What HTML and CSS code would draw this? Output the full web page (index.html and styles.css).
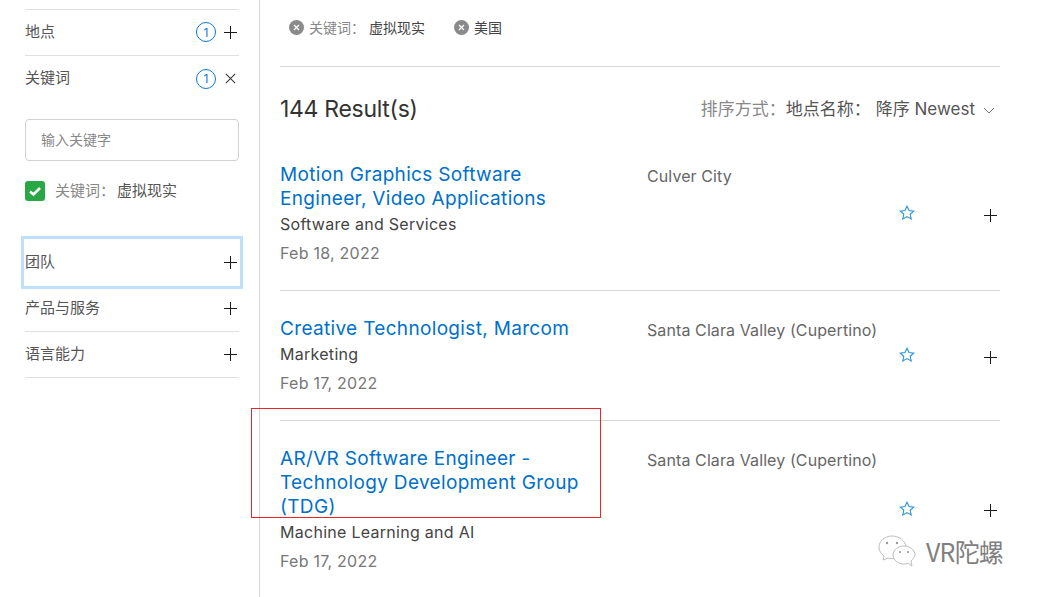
FILE: index.html
```html
<!DOCTYPE html>
<html lang="zh">
<head>
<meta charset="utf-8">
<title>Jobs</title>
<link rel="stylesheet" href="styles.css">
</head>
<body>
<div class="page">
  <aside class="sidebar">
    <div class="filter first"><span class="name">地点</span><span class="controls"><span class="count">1</span><svg class="ico" viewBox="0 0 14 14"><path d="M7 0v14M0 7h14"/></svg></span></div>
    <div class="filter open"><span class="name">关键词</span><span class="controls"><span class="count">1</span><svg class="ico x" viewBox="0 0 14 14"><path d="M2 2l10 10M12 2L2 12"/></svg></span></div>
    <div class="keyword">
      <div class="input">输入关键字</div>
      <div class="check"><svg class="box" viewBox="0 0 20 20"><rect width="20" height="20" rx="3" fill="#28a745"/><path d="M5 10.5l3.500 3L15 7" fill="none" stroke="#fff" stroke-width="2.600"/></svg><span class="lab">关键词：</span><span class="val">虚拟现实</span></div>
    </div>
    <div class="filter focus"><span class="name">团队</span><svg class="ico" viewBox="0 0 14 14"><path d="M7 0v14M0 7h14"/></svg></div>
    <div class="filter after"><span class="name">产品与服务</span><svg class="ico" viewBox="0 0 14 14"><path d="M7 0v14M0 7h14"/></svg></div>
    <div class="filter"><span class="name">语言能力</span><svg class="ico" viewBox="0 0 14 14"><path d="M7 0v14M0 7h14"/></svg></div>
  </aside>
  <main class="main">
    <div class="tags">
      <span class="tag"><svg class="tx" viewBox="0 0 15 15"><circle cx="7.500" cy="7.500" r="7.500" fill="#8a8a8a"/><path d="M5 5l5 5M10 5l-5 5" stroke="#fff" stroke-width="1.300"/></svg><span class="lab">关键词：</span><span class="val">虚拟现实</span></span>
      <span class="tag"><svg class="tx" viewBox="0 0 15 15"><circle cx="7.500" cy="7.500" r="7.500" fill="#8a8a8a"/><path d="M5 5l5 5M10 5l-5 5" stroke="#fff" stroke-width="1.300"/></svg><span class="val">美国</span></span>
    </div>
    <div class="head">
      <h1>144 Result(s)</h1>
      <div class="sort"><span class="sl">排序方式：</span><span class="sn">地点名称：</span><span class="sv">降序 Newest</span><svg class="chev" viewBox="0 0 12 7"><path d="M1 1l5 5 5-5"/></svg></div>
    </div>
    <article class="job one">
      <div class="info"><a class="title">Motion Graphics Software Engineer, Video Applications</a><div class="team">Software and Services</div><div class="date">Feb 18, 2022</div></div>
      <div class="loc">Culver City</div>
      <div class="acts a1"><svg class="star" viewBox="0 0 16 16"><path d="M8 1.200l2 4.400 4.700.5-3.500 3.200 1 4.700L8 11.600l-4.200 2.400 1-4.700L1.300 6.100 6 5.600z"/></svg><svg class="ico" viewBox="0 0 14 14"><path d="M7 0v14M0 7h14"/></svg></div>
    </article>
    <article class="job two">
      <div class="info"><a class="title">Creative Technologist, Marcom</a><div class="team">Marketing</div><div class="date">Feb 17, 2022</div></div>
      <div class="loc">Santa Clara Valley (Cupertino)</div>
      <div class="acts a2"><svg class="star" viewBox="0 0 16 16"><path d="M8 1.200l2 4.400 4.700.5-3.500 3.200 1 4.700L8 11.600l-4.200 2.400 1-4.700L1.300 6.100 6 5.600z"/></svg><svg class="ico" viewBox="0 0 14 14"><path d="M7 0v14M0 7h14"/></svg></div>
    </article>
    <article class="job three">
      <div class="info"><a class="title">AR/VR Software Engineer - Technology Development Group (TDG)</a><div class="team">Machine Learning and AI</div><div class="date">Feb 17, 2022</div></div>
      <div class="loc">Santa Clara Valley (Cupertino)</div>
      <div class="acts a3"><svg class="star" viewBox="0 0 16 16"><path d="M8 1.200l2 4.400 4.700.5-3.500 3.200 1 4.700L8 11.600l-4.200 2.400 1-4.700L1.300 6.100 6 5.600z"/></svg><svg class="ico" viewBox="0 0 14 14"><path d="M7 0v14M0 7h14"/></svg></div>
    </article>
  </main>
</div>
<div class="redbox"></div>
<div class="mark"><svg class="wc" viewBox="0 0 40 34"><g fill="#fff" stroke="#bdbdbd" stroke-width="1"><path d="M15 2C8 2 2 7 2 13c0 4 2 7 5 9l-1 4 5-2c3 1 5 1 8 0 6-1 10-6 10-11C29 7 22 2 15 2z"/><path d="M27 12c-6 0-11 4-11 9s5 9 11 9c1 0 3 0 4-1l4 3-1-5c2-2 4-4 4-6 0-5-5-9-11-9z"/></g><g fill="#999"><circle cx="10" cy="9" r="1.200"/><circle cx="20" cy="9" r="1.200"/><circle cx="23" cy="18" r="1.100"/><circle cx="31" cy="18" r="1.100"/></g></svg><span>VR陀螺</span></div>
</body>
</html>
```
FILE: styles.css
```css
* { box-sizing: border-box; }
html, body { margin: 0; height: 597px; overflow: hidden; background: #fff; }
body { position: relative; font-family: Inter, "Noto Sans CJK SC", sans-serif; color: #333; }
.page { display: flex; height: 597px; }
.sidebar { width: 260px; height: 597px; flex: none; border-right: 1px solid #d6d6d6; padding: 9px 20px 0 25px; font-size: 15px; color: #555; }
.filter { height: 46px; display: flex; justify-content: space-between; align-items: center; border-bottom: 1px solid #e0e0e0; padding-bottom: 1px; }
.filter.first { border-top: 1px solid #e0e0e0; height: 47px; }
.filter.open { border-bottom: 0; }
.filter.after { height: 45px; padding-bottom: 2px; }
.filter .ico { margin-right: 2px; }
.name { margin-bottom: 4px; }
.controls { display: flex; align-items: center; gap: 8px; }
.count { width: 20px; height: 20px; border: 1px solid #0a78d2; border-radius: 50%; color: #0a78d2; font-size: 12px; display: flex; align-items: center; justify-content: center; }
.ico { width: 13px; height: 13px; flex: none; fill: none; stroke: #1a1a1a; stroke-width: 1.100; }
.ico.x { stroke: #333; }
.keyword { padding-top: 17px; height: 136px; }
.input { height: 42px; border: 1px solid #d2d2d2; border-radius: 4px; padding: 0 0 2px 15px; font-size: 14px; color: #888; display: flex; align-items: center; }
.check { display: flex; align-items: center; margin-top: 20px; height: 20px; color: #888; font-size: 15px; }
.box { width: 20px; height: 20px; margin-right: 10px; }
.lab { color: #888; margin-right: 2px; }
.val { color: #555; }
.check .lab, .check .val { margin-bottom: 4px; }
.filter.focus { height: 49px; margin: 0 -2px; padding: 0 2px; border: 0; outline: 3px solid #bfdffb; outline-offset: -1px; position: relative; }
.filter.focus .ico { margin-right: 2px; }
.main { width: 720px; margin-left: 20px; flex: none; }
.tags { height: 58px; border-bottom: 1px solid #d6d6d6; display: flex; align-items: flex-start; padding: 8px 0 0 9px; gap: 29px; font-size: 14px; margin-top: 9px; }
.tag { display: flex; align-items: center; }
.tx { width: 15px; height: 15px; margin-right: 5px; }
.tag .lab { margin-right: 4px; }
.tag .val { color: #444; }
.head { display: flex; justify-content: space-between; align-items: center; height: 84px; }
h1 { margin: 0; font-size: 23px; font-weight: 400; color: #333; letter-spacing: -.3px; }
.sort { display: flex; align-items: center; font-size: 17px; color: #666; margin-right: 5px; }
.sort span { padding-bottom: 4px; }
.sl { color: #888; }
.sn { color: #555; margin-right: 5px; }
.sv { color: #555; }
.chev { width: 12px; height: 7px; margin: 2px 0 0 8px; fill: none; stroke: #777; stroke-width: 1; }
.job { display: grid; grid-template-columns: 367px 1fr; position: relative; border-bottom: 1px solid #d6d6d6; }
.job.one { height: 140px; padding-top: 12px; }
.job.two { height: 130px; padding-top: 26px; }
.job.three { padding-top: 26px; border-bottom: 0; }
.title { display: block; width: 310px; color: #0070c9; font-size: 19px; line-height: 24px; letter-spacing: .33px; }
.team { font-size: 16px; color: #444; line-height: 20px; margin-top: 3px; letter-spacing: .28px; }
.date { font-size: 16px; color: #777; line-height: 20px; margin-top: 9px; letter-spacing: .25px; }
.loc { font-size: 16px; color: #666; line-height: 20px; padding-top: 3px; letter-spacing: .1px; }
.acts { position: absolute; right: 3px; display: flex; align-items: center; gap: 69px; }
.a1 { top: 58px; }
.a2 { top: 60px; }
.a3 { top: 83px; }
.star { width: 16px; height: 16px; fill: none; stroke: #2a94d6; stroke-width: 1.100; margin-top: -4px; }
.a1 .star, .a2 .star { margin-top: -6px; }
.redbox { position: absolute; left: 251px; top: 408px; width: 350px; height: 110px; border: 1px solid #e8262a; }
.mark { position: absolute; left: 877px; top: 534px; display: flex; align-items: center; gap: 9px; font-size: 25px; color: #808080; font-family: "Noto Sans CJK SC", sans-serif; }
.mark span { letter-spacing: -.8px; line-height: 34px; }
.wc { width: 40px; height: 34px; }
```
